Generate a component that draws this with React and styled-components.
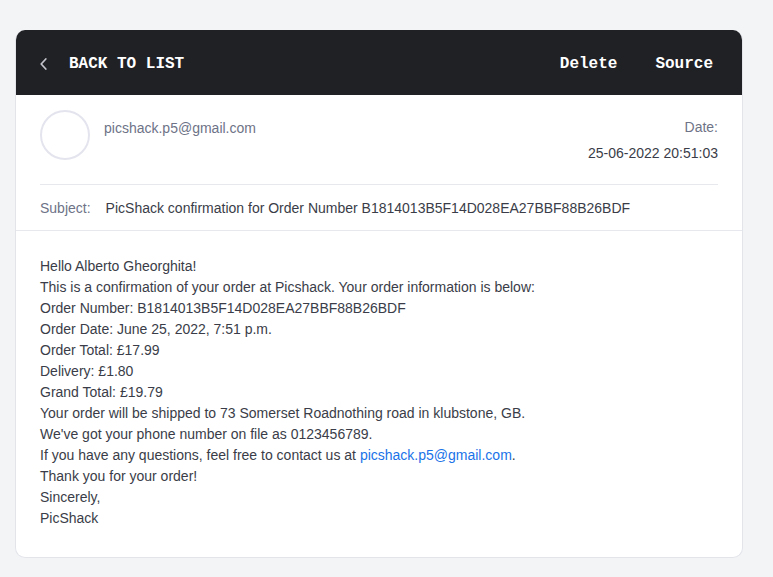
import React from "react";
import styled, { createGlobalStyle } from "styled-components";

const Global = createGlobalStyle`
  html, body { margin: 0; padding: 0; background: #f3f4f6; }
  body { font-family: "Liberation Sans", Arial, sans-serif; }
`;

const Page = styled.div`
  padding: 30px 30px 20px 15px;
`;

const Card = styled.div`
  width: 728px;
  box-sizing: border-box;
  background: #fff;
  border: 1px solid #e2e4ea;
  border-top: none;
  border-radius: 10px;
  overflow: hidden;
`;

const Toolbar = styled.div`
  height: 65px;
  box-sizing: border-box;
  background: #202125;
  display: flex;
  align-items: center;
  justify-content: space-between;
  padding: 2px 30px 0 25px;
  margin: 0 -1px;
  font-family: "Liberation Mono", "Courier New", monospace;
  font-weight: 700;
  font-size: 16px;
  color: #fff;
`;

const Back = styled.div`
  display: flex;
  align-items: center;
  gap: 22px;
`;

const Actions = styled.div`
  display: flex;
  gap: 38px;
`;

const Action = styled.span`
  cursor: pointer;
`;

const Meta = styled.div`
  padding: 0 24px;
`;

const SenderRow = styled.div`
  display: flex;
  justify-content: space-between;
  padding: 15px 0 21px;
  border-bottom: 1px solid #e7e8ee;
`;

const Sender = styled.div`
  display: flex;
  gap: 14px;
  align-items: flex-start;
`;

const Avatar = styled.div`
  width: 50px;
  height: 50px;
  box-sizing: border-box;
  border-radius: 50%;
  border: 2px solid #e4e4ee;
`;

const Muted = styled.div`
  color: #6e7387;
  font-size: 14px;
  line-height: 20px;
  margin-top: ${(p) => p.$top || 0}px;
`;

const DateCol = styled.div`
  text-align: right;
  display: flex;
  flex-direction: column;
  gap: 6px;
  padding-top: 7px;
`;

const Dark = styled.div`
  color: #3a3d48;
  font-size: 14px;
  line-height: 20px;
`;

const SubjectRow = styled.div`
  display: flex;
  gap: 15px;
  align-items: center;
  height: 45px;
  font-size: 14px;
`;

const Label = styled.span`
  color: #6e7387;
`;

const SubjectText = styled.span`
  color: #3a3d48;
`;

const Body = styled.div`
  border-top: 1px solid #e7e8ee;
  padding: 25px 24px 28px;
  font-size: 14px;
  line-height: 21px;
  color: #3a3d48;
`;

const Line = styled.div``;

const Link = styled.a`
  color: #1a73e8;
  text-decoration: none;
`;

const Chevron = () => (
  <svg width="7" height="12" viewBox="0 0 7 12" fill="none">
    <path d="M5.8 1L1.2 6l4.6 5" stroke="#c4c5cc" strokeWidth="1.7" strokeLinecap="round" strokeLinejoin="round" />
  </svg>
);

export default function App() {
  const lines = [
    "Hello Alberto Gheorghita!",
    "This is a confirmation of your order at Picshack. Your order information is below:",
    "Order Number: B1814013B5F14D028EA27BBF88B26BDF",
    "Order Date: June 25, 2022, 7:51 p.m.",
    "Order Total: £17.99",
    "Delivery: £1.80",
    "Grand Total: £19.79",
    "Your order will be shipped to 73 Somerset Roadnothing road in klubstone, GB.",
    "We've got your phone number on file as 0123456789.",
  ];
  return (
    <Page>
      <Global />
      <Card>
        <Toolbar>
          <Back>
            <Chevron />
            <span>BACK TO LIST</span>
          </Back>
          <Actions>
            <Action>Delete</Action>
            <Action>Source</Action>
          </Actions>
        </Toolbar>
        <Meta>
          <SenderRow>
            <Sender>
              <Avatar />
              <Muted $top={8}>picshack.p5@gmail.com</Muted>
            </Sender>
            <DateCol>
              <Muted>Date:</Muted>
              <Dark>25-06-2022 20:51:03</Dark>
            </DateCol>
          </SenderRow>
          <SubjectRow>
            <Label>Subject:</Label>
            <SubjectText>PicShack confirmation for Order Number B1814013B5F14D028EA27BBF88B26BDF</SubjectText>
          </SubjectRow>
        </Meta>
        <Body>
          {lines.map((l) => (
            <Line key={l}>{l}</Line>
          ))}
          <Line>
            If you have any questions, feel free to contact us at{" "}
            <Link href="#">picshack.p5@gmail.com</Link>.
          </Line>
          <Line>Thank you for your order!</Line>
          <Line>Sincerely,</Line>
          <Line>PicShack</Line>
        </Body>
      </Card>
    </Page>
  );
}
